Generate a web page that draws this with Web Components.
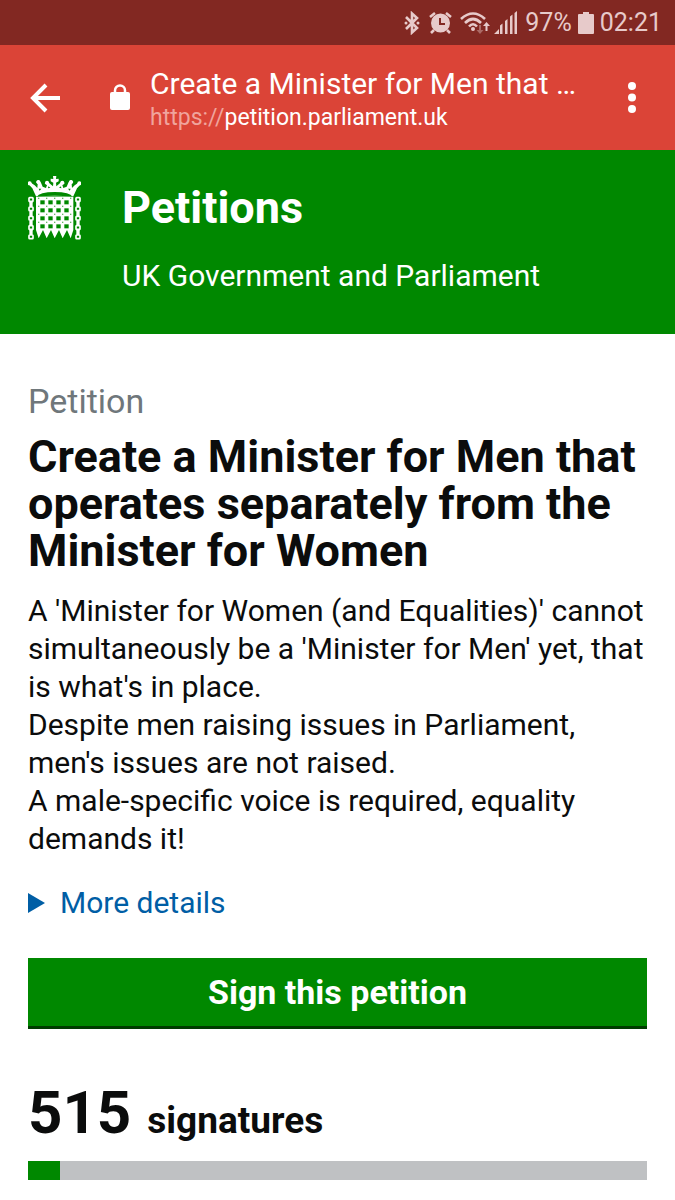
<!DOCTYPE html>
<html lang="en-GB">
<head>
<meta charset="utf-8">
<meta name="viewport" content="width=device-width, initial-scale=1">
<title>Create a Minister for Men that operates separately from the Minister for Women - Petitions</title>
<style>
  body {
    margin: 0;
    background: #fff;
    color: #0b0c0c;
    font-family: Roboto, "Liberation Sans", sans-serif;
    --green: #008800;
    --gutter: 28px;
  }
</style>
</head>
<body>
  <status-bar battery="97%" time="02:21"></status-bar>
  <browser-bar scheme="https://" host="petition.parliament.uk">Create a Minister for Men that …</browser-bar>
  <site-header>
    Petitions
    <span slot="tagline">UK Government and Parliament</span>
  </site-header>
  <petition-page>
    <span slot="kicker">Petition</span>
    <span slot="title">Create a Minister for Men that operates separately from the Minister for Women</span>
    <p>A 'Minister for Women (and Equalities)' cannot simultaneously be a 'Minister for Men' yet, that is what's in place.</p>
    <p>Despite men raising issues in Parliament, men's issues are not raised.</p>
    <p>A male-specific voice is required, equality demands it!</p>
    <more-details slot="details">More details</more-details>
    <sign-button slot="action">Sign this petition</sign-button>
    <signature-count slot="count" count="515" goal="10000">signatures</signature-count>
  </petition-page>

<script>
/**
 * <status-bar> Phone status icons, battery level and clock.
 *
 * @attr {string} battery - Battery level
 * @attr {string} time - Clock text
 */
class StatusBar extends HTMLElement {
  constructor() {
    super();
    this.attachShadow({ mode: 'open' });
  }

  connectedCallback() {
    this.shadowRoot.innerHTML = `
      <style>
        :host {
          display: flex;
          align-items: center;
          justify-content: flex-end;
          height: 45px;
          padding-right: 13px;
          background: #822822;
          color: #e7caca;
          font-size: 25px;
          line-height: 28px;
        }
        svg { display: block; fill: currentColor; }
        .bluetooth { margin-right: 9px; }
        .alarm { margin-right: 8px; }
        .wifi { margin-right: 4px; }
        .signal { margin-right: 8px; }
        .battery { margin: 0 6px; }
      </style>
      <svg class="bluetooth" width="16" height="24" viewBox="0 0 16 24" aria-hidden="true">
        <path d="M2 6L13 17L8 21.500V2.500L13 7L2 18" fill="none" stroke="currentColor" stroke-width="2.600"/>
        <circle cx="2" cy="12" r="1.500"/><circle cx="14" cy="12" r="1.500"/>
      </svg>
      <svg class="alarm" width="23" height="24" viewBox="0 0 23 24" aria-hidden="true">
        <path d="M1 6L6 2M22 6L17 2M5 19L2 22M18 19L21 22" stroke="currentColor" stroke-width="2.600"/>
        <path fill-rule="evenodd" d="M11.500 2.500a9.500 9.500 0 1 0 0 19a9.500 9.500 0 0 0 0-19zM10 7h2v5h4v2h-6z"/>
      </svg>
      <svg class="wifi" width="30" height="24" viewBox="0 0 30 24" aria-hidden="true">
        <g fill="none" stroke="currentColor" stroke-width="2.600">
          <path d="M1 8Q13 -3 25 8"/>
          <path d="M5 12Q13 4 21 12"/>
          <path d="M9 15.500Q13 11 17 15.500"/>
        </g>
        <circle cx="13" cy="18" r="2"/>
        <path d="M25.500 20v-5h-2.500l3.500-4l3.500 4h-2.500v5z"/>
        <path opacity=".4" d="M19 14h2v5h2.500l-3.500 4l-3.500-4h2.500z"/>
      </svg>
      <svg class="signal" width="23" height="24" viewBox="0 0 23 24" aria-hidden="true">
        <path d="M0 23L5 18V23zM6 14.500l2.500-2v10.500h-2.500zM11 10l2.500-2v15h-2.500zM16 5.500l2.500-2v19.500h-2.500zM20.500 2l2.500-2v23h-2.500z"/>
      </svg>
      <span>${this.getAttribute('battery')}</span>
      <svg class="battery" width="16" height="24" viewBox="0 0 16 24" aria-hidden="true">
        <path d="M5 1h6v2h4q1 0 1 1v18q0 1-1 1h-14q-1 0-1-1v-18q0-1 1-1h4z"/>
      </svg>
      <span>${this.getAttribute('time')}</span>
    `;
  }
}

/**
 * <browser-bar> Back button, page title with its address, and overflow menu.
 *
 * @attr {string} scheme - Dimmed start of the address
 * @attr {string} host - Host name
 */
class BrowserBar extends HTMLElement {
  constructor() {
    super();
    this.attachShadow({ mode: 'open' });
  }

  connectedCallback() {
    this.shadowRoot.innerHTML = `
      <style>
        :host {
          display: flex;
          align-items: center;
          box-sizing: border-box;
          height: 105px;
          padding: 0 28px;
          background: #db4437;
          color: #fff;
        }
        button {
          flex: none;
          padding: 0;
          border: 0;
          background: none;
          color: inherit;
          cursor: pointer;
        }
        svg { display: block; flex: none; fill: currentColor; }
        .lock { margin: 0 20px 0 48px; }
        .text { flex: 1; min-width: 0; padding-top: 4px; }
        .title {
          overflow: hidden;
          font-size: 30px;
          line-height: 36px;
          text-overflow: ellipsis;
          white-space: nowrap;
        }
        .address { font-size: 23px; line-height: 32px; }
        .scheme { color: #f0a49d; }
      </style>
      <button type="button" aria-label="Back">
        <svg width="34" height="34" viewBox="0 0 34 34">
          <path d="M32 17H5M18 4L5 17L18 30" fill="none" stroke="currentColor" stroke-width="4"/>
        </svg>
      </button>
      <svg class="lock" width="20" height="28" viewBox="0 0 20 28" aria-hidden="true">
        <path d="M5 10V6.500a5 5 0 0 1 10 0v3.500" fill="none" stroke="currentColor" stroke-width="2.500"/>
        <rect y="8" width="20" height="18" rx="2"/>
      </svg>
      <div class="text">
        <div class="title"><slot></slot></div>
        <div class="address"><span class="scheme">${this.getAttribute('scheme')}</span>${this.getAttribute('host')}</div>
      </div>
      <button type="button" aria-label="More options">
        <svg width="30" height="32" viewBox="0 0 30 32">
          <circle cx="15" cy="4" r="4"/><circle cx="15" cy="15.500" r="4"/><circle cx="15" cy="27" r="4"/>
        </svg>
      </button>
    `;
  }
}

/**
 * <portcullis-logo> Crowned portcullis with a chain on each side.
 */
class PortcullisLogo extends HTMLElement {
  constructor() {
    super();
    this.attachShadow({ mode: 'open' });
  }

  connectedCallback() {
    this.shadowRoot.innerHTML = `
      <style>
        :host { display: block; }
        svg { display: block; fill: #fff; }
        .cut { fill: var(--green); }
      </style>
      <svg width="53" height="64" viewBox="0 0 159 192" aria-hidden="true">
        ${this.crown()}
        <path d="M24 62H136V162L128 187L117 162L104 187L93 162L80 187L69 162L56 187L45 162L32 187L24 162z"/>
        ${this.holes()}
        ${this.chain(9)}
        ${this.chain(150)}
      </svg>
    `;
  }

  crown() {
    return `
      <path d="M24 61L13 37L1 24L4 17L20 28L28 36L29 24L24 18L31 12L38 18L44 32L54 36L57 27L50 22L58 15L66 23L75 31L76 20L68 16L68 8L76 9L75 0H85L84 9L92 8V16L84 20L85 31L94 23L102 15L110 22L103 27L106 36L116 32L122 18L129 12L136 18L131 24L132 36L140 28L156 17L159 24L147 37L136 61z"/>
      <g>
        <circle cx="5" cy="22" r="6"/><circle cx="31" cy="18" r="6"/><circle cx="57" cy="20" r="6"/>
        <circle cx="103" cy="20" r="6"/><circle cx="129" cy="18" r="6"/><circle cx="154" cy="22" r="6"/>
      </g>
      <g class="cut">
        <path d="M26 63Q34 48 80 48Q126 48 134 63Q80 55 26 63z"/>
        <path d="M32 38L40 38L35 44zM128 38L120 38L125 44zM61 31L67 35L60 37zM99 31L93 35L100 37z"/>
      </g>
    `;
  }

  holes() {
    let out = '';
    for (let row = 0; row < 4; row++) {
      for (let col = 0; col < 4; col++) {
        out += `<rect class="cut" x="${37 + col * 24}" y="${73 + row * 24}" width="13" height="12"/>`;
      }
      for (let col = 0; col < 5; col++) {
        out += `<rect class="cut" x="${30 + col * 24}" y="${65 + row * 24}" width="4" height="4" opacity=".6"/>`;
      }
    }
    return out;
  }

  chain(x) {
    let out = '';
    for (let i = 0; i < 5; i++) {
      out += `<rect x="${x - 6}" y="${65 + i * 28}" width="12" height="11" rx="2" fill="none" stroke="#fff" stroke-width="5"/>`;
      if (i < 4) out += `<rect x="${x - 5}" y="${76 + i * 28}" width="10" height="17" rx="3"/>`;
    }
    return out;
  }
}

/**
 * <site-header> Green banner with the logo, site name and tagline.
 */
class SiteHeader extends HTMLElement {
  constructor() {
    super();
    this.attachShadow({ mode: 'open' });
  }

  connectedCallback() {
    this.shadowRoot.innerHTML = `
      <style>
        :host { display: block; }
        header {
          display: flex;
          gap: 41px;
          padding: 26px var(--gutter) 36px;
          background: var(--green);
          color: #fff;
        }
        .name {
          padding: 6px 0 20px;
          font-size: 45px;
          font-weight: 700;
          line-height: 52px;
        }
        .tagline { font-size: 30px; line-height: 44px; }
      </style>
      <header>
        <portcullis-logo></portcullis-logo>
        <div>
          <div class="name"><slot></slot></div>
          <div class="tagline"><slot name="tagline"></slot></div>
        </div>
      </header>
    `;
  }
}

/**
 * <petition-page> The petition itself: heading, text and actions.
 */
class PetitionPage extends HTMLElement {
  constructor() {
    super();
    this.attachShadow({ mode: 'open' });
  }

  connectedCallback() {
    this.shadowRoot.innerHTML = `
      <style>
        :host { display: block; }
        main { padding: 47px var(--gutter) 20px; }
        .kicker {
          color: #6f777b;
          font-size: 34px;
          line-height: 40px;
        }
        h1 {
          margin: 12px 0 18px;
          font-size: 45px;
          font-weight: 700;
          line-height: 47px;
        }
        .text { font-size: 30px; line-height: 38px; }
        ::slotted(p) { margin: 0; }
      </style>
      <main>
        <div class="kicker"><slot name="kicker"></slot></div>
        <h1><slot name="title"></slot></h1>
        <div class="text"><slot></slot></div>
        <slot name="details"></slot>
        <slot name="action"></slot>
        <slot name="count"></slot>
      </main>
    `;
  }
}

/**
 * <more-details> Disclosure with a solid triangle before its label.
 */
class MoreDetails extends HTMLElement {
  constructor() {
    super();
    this.attachShadow({ mode: 'open' });
  }

  connectedCallback() {
    this.shadowRoot.innerHTML = `
      <style>
        :host { display: block; margin: 26px 0 36px; }
        summary {
          display: inline-flex;
          align-items: center;
          gap: 15px;
          color: #005ea5;
          font-size: 30px;
          line-height: 38px;
          list-style: none;
          cursor: pointer;
        }
        summary::before {
          content: "";
          border: solid transparent;
          border-width: 10px 0 10px 17px;
          border-left-color: currentColor;
        }
        details[open] summary::before { transform: rotate(90deg); }
      </style>
      <details>
        <summary><slot></slot></summary>
      </details>
    `;
  }
}

/**
 * <sign-button> Full width call to action.
 */
class SignButton extends HTMLElement {
  constructor() {
    super();
    this.attachShadow({ mode: 'open' });
  }

  connectedCallback() {
    this.shadowRoot.innerHTML = `
      <style>
        :host { display: block; margin-bottom: 52px; }
        button {
          display: block;
          width: 100%;
          padding: 14px 20px;
          border: 0;
          border-bottom: 3px solid #003c00;
          background: var(--green);
          color: #fff;
          font: 700 34px/40px Roboto, "Liberation Sans", sans-serif;
          cursor: pointer;
        }
      </style>
      <button type="button"><slot></slot></button>
    `;
  }
}

/**
 * <signature-count> Number of signatures and progress to the goal.
 *
 * @attr {number} count - Signatures so far
 * @attr {number} goal - Signatures needed
 */
class SignatureCount extends HTMLElement {
  constructor() {
    super();
    this.attachShadow({ mode: 'open' });
  }

  connectedCallback() {
    const count = this.getAttribute('count');

    this.shadowRoot.innerHTML = `
      <style>
        :host { display: block; }
        label {
          display: flex;
          align-items: baseline;
          gap: 16px;
          margin-bottom: 8px;
          font-size: 37px;
          font-weight: 700;
          line-height: 64px;
        }
        .count { font-size: 60px; }
        progress {
          display: block;
          width: 100%;
          height: 19px;
          border: 0;
          background: #bfc1c3;
          appearance: none;
        }
        progress::-webkit-progress-bar { background: #bfc1c3; }
        progress::-webkit-progress-value { background: var(--green); }
        progress::-moz-progress-bar { background: var(--green); }
      </style>
      <label for="progress"><span class="count">${count}</span><slot></slot></label>
      <progress id="progress" value="${count}" max="${this.getAttribute('goal')}"></progress>
    `;
  }
}

customElements.define('status-bar', StatusBar);
customElements.define('browser-bar', BrowserBar);
customElements.define('portcullis-logo', PortcullisLogo);
customElements.define('site-header', SiteHeader);
customElements.define('petition-page', PetitionPage);
customElements.define('more-details', MoreDetails);
customElements.define('sign-button', SignButton);
customElements.define('signature-count', SignatureCount);
</script>
</body>
</html>
